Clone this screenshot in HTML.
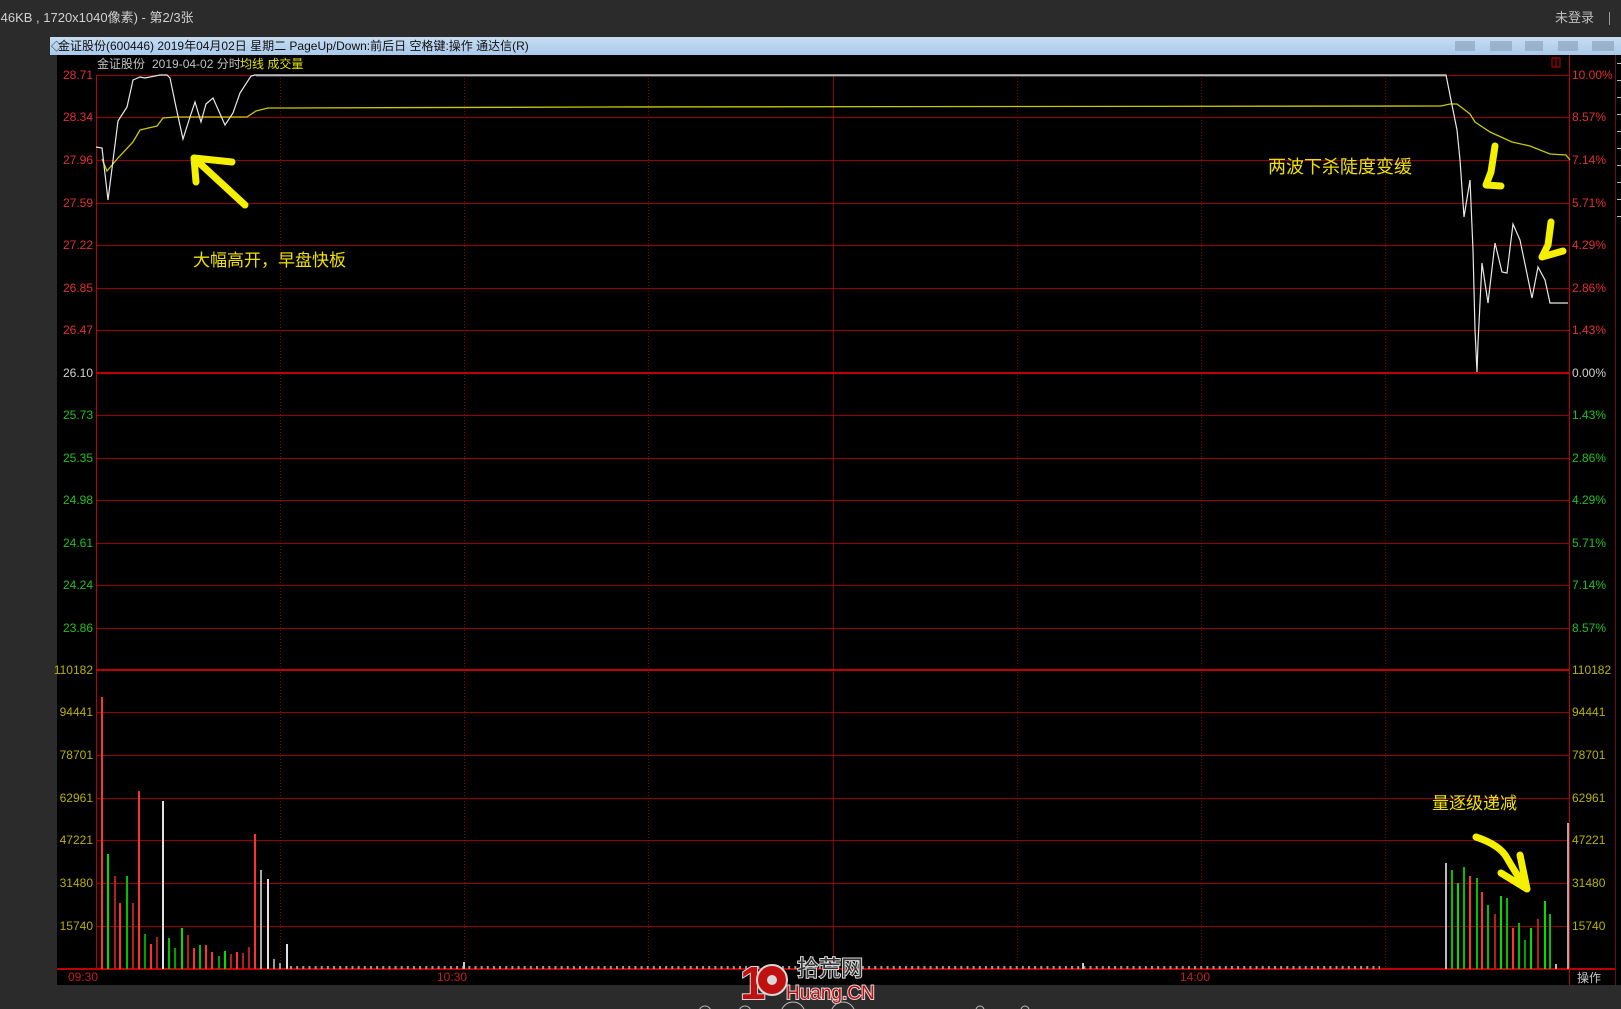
<!DOCTYPE html>
<html><head><meta charset="utf-8"><style>
html,body{margin:0;padding:0;background:#2b2b2b;width:1621px;height:1009px;overflow:hidden}
svg{display:block}
text{font-family:"Liberation Sans","Noto Sans CJK SC",sans-serif}
</style></head><body>
<svg width="1621" height="1009" viewBox="0 0 1621 1009" xmlns="http://www.w3.org/2000/svg">
<defs>
<linearGradient id="tb" x1="0" y1="0" x2="0" y2="1"><stop offset="0" stop-color="#c8ddf2"/><stop offset="1" stop-color="#a9c9ea"/></linearGradient>
<pattern id="tiny" x="290" y="0" width="6.15" height="1009" patternUnits="userSpaceOnUse"><rect x="0" y="966" width="2" height="3" fill="#9a9a9a"/></pattern>
</defs>
<rect width="1621" height="1009" fill="#2b2b2b"/>
<text x="-3" y="22" font-size="13" fill="#d0d0d0">.46KB , 1720x1040像素) - 第2/3张</text>
<text x="1555" y="22" font-size="13" fill="#bdbdbd">未登录</text>
<rect x="1609" y="12" width="1" height="13" fill="#999"/>
<!-- title bar -->
<rect x="50" y="37" width="1571" height="18" fill="url(#tb)"/>
<text x="51" y="50" font-size="11" fill="#222">◇</text>
<text x="58" y="50" font-size="12" fill="#111">金证股份(600446) 2019年04月02日 星期二 PageUp/Down:前后日 空格键:操作 通达信(R)</text>
<g fill="#8fa6bf" opacity="0.7"><rect x="1455" y="41" width="20" height="10"/><rect x="1490" y="41" width="22" height="10"/><rect x="1525" y="41" width="18" height="10"/><rect x="1558" y="41" width="20" height="10"/><rect x="1592" y="41" width="22" height="10"/></g>
<!-- chart panel -->
<rect x="57" y="55" width="1564" height="930" fill="#000"/>
<rect x="1615" y="55" width="1" height="930" fill="#6a1010"/>
<g fill="#bbb"><rect x="1617" y="63" width="4" height="1"/><rect x="1617" y="80" width="4" height="1"/><rect x="1617" y="97" width="4" height="1"/><rect x="1617" y="114" width="4" height="1"/><rect x="1617" y="131" width="4" height="1"/><rect x="1617" y="148" width="4" height="1"/><rect x="1617" y="165" width="4" height="1"/><rect x="1617" y="182" width="4" height="1"/><rect x="1617" y="199" width="4" height="1"/><rect x="1617" y="216" width="4" height="1"/></g>
<text x="97" y="68" font-size="12" fill="#c0c0c0">金证股份</text>
<text x="152" y="68" font-size="12" fill="#c0c0c0">2019-04-02 分时</text>
<text x="240" y="68" font-size="12" fill="#e0e000">均线 成交量</text>
<rect x="1552" y="58" width="8" height="9" fill="none" stroke="#c00" stroke-width="1"/><rect x="1555.5" y="58" width="1" height="9" fill="#c00"/>
<!-- vertical grid -->
<g stroke="#8a0000" stroke-width="1" stroke-dasharray="1,2">
<line x1="280.5" y1="75" x2="280.5" y2="969"/><line x1="464.5" y1="75" x2="464.5" y2="969"/><line x1="648.5" y1="75" x2="648.5" y2="969"/>
<line x1="1017.5" y1="75" x2="1017.5" y2="969"/><line x1="1201.5" y1="75" x2="1201.5" y2="969"/><line x1="1385.5" y1="75" x2="1385.5" y2="969"/>
</g>
<line x1="833.5" y1="75" x2="833.5" y2="969" stroke="#8a0000" stroke-width="1"/>
<!-- horizontal grid -->
<g stroke="#9a0000" stroke-width="1">
<line x1="96" y1="75.5" x2="1569" y2="75.5"/><line x1="96" y1="117.5" x2="1569" y2="117.5"/><line x1="96" y1="160.5" x2="1569" y2="160.5"/><line x1="96" y1="203.5" x2="1569" y2="203.5"/><line x1="96" y1="245.5" x2="1569" y2="245.5"/><line x1="96" y1="288.5" x2="1569" y2="288.5"/><line x1="96" y1="330.5" x2="1569" y2="330.5"/>
<line x1="96" y1="415.5" x2="1569" y2="415.5"/><line x1="96" y1="458.5" x2="1569" y2="458.5"/><line x1="96" y1="500.5" x2="1569" y2="500.5"/><line x1="96" y1="543.5" x2="1569" y2="543.5"/><line x1="96" y1="585.5" x2="1569" y2="585.5"/><line x1="96" y1="628.5" x2="1569" y2="628.5"/>
<line x1="96" y1="712.5" x2="1569" y2="712.5"/><line x1="96" y1="755.5" x2="1569" y2="755.5"/><line x1="96" y1="798.5" x2="1569" y2="798.5"/><line x1="96" y1="840.5" x2="1569" y2="840.5"/><line x1="96" y1="883.5" x2="1569" y2="883.5"/><line x1="96" y1="926.5" x2="1569" y2="926.5"/>
</g>
<g stroke="#c00000" stroke-width="2">
<line x1="96" y1="373" x2="1569" y2="373"/><line x1="96" y1="670" x2="1569" y2="670"/><line x1="57" y1="969" x2="1615" y2="969"/>
</g>
<line x1="96.5" y1="75" x2="96.5" y2="969" stroke="#c00000"/>
<line x1="1569.5" y1="55" x2="1569.5" y2="985" stroke="#c00000"/>
<!-- left labels -->
<g font-size="12" text-anchor="end">
<g fill="#e03030"><text x="93" y="79">28.71</text><text x="93" y="121">28.34</text><text x="93" y="164">27.96</text><text x="93" y="207">27.59</text><text x="93" y="249">27.22</text><text x="93" y="292">26.85</text><text x="93" y="334">26.47</text></g>
<text x="93" y="377" fill="#d0d0d0">26.10</text>
<g fill="#20c020"><text x="93" y="419">25.73</text><text x="93" y="462">25.35</text><text x="93" y="504">24.98</text><text x="93" y="547">24.61</text><text x="93" y="589">24.24</text><text x="93" y="632">23.86</text></g>
<g fill="#b8b000"><text x="93" y="674">110182</text><text x="93" y="716">94441</text><text x="93" y="759">78701</text><text x="93" y="802">62961</text><text x="93" y="844">47221</text><text x="93" y="887">31480</text><text x="93" y="930">15740</text></g>
</g>
<!-- right labels -->
<g font-size="12">
<g fill="#e03030"><text x="1572" y="79">10.00%</text><text x="1572" y="121">8.57%</text><text x="1572" y="164">7.14%</text><text x="1572" y="207">5.71%</text><text x="1572" y="249">4.29%</text><text x="1572" y="292">2.86%</text><text x="1572" y="334">1.43%</text></g>
<text x="1572" y="377" fill="#d0d0d0">0.00%</text>
<g fill="#20c020"><text x="1572" y="419">1.43%</text><text x="1572" y="462">2.86%</text><text x="1572" y="504">4.29%</text><text x="1572" y="547">5.71%</text><text x="1572" y="589">7.14%</text><text x="1572" y="632">8.57%</text></g>
<g fill="#b8b000"><text x="1572" y="674">110182</text><text x="1572" y="716">94441</text><text x="1572" y="759">78701</text><text x="1572" y="802">62961</text><text x="1572" y="844">47221</text><text x="1572" y="887">31480</text><text x="1572" y="930">15740</text></g>
</g>
<!-- time labels -->
<g font-size="12" fill="#c02020"><text x="68" y="981">09:30</text><text x="437" y="981">10:30</text><text x="1180" y="981">14:00</text></g>
<text x="1577" y="982" font-size="12" fill="#c8c8c8">操作</text>
<!-- avg line -->
<polyline fill="none" stroke="#c8c800" stroke-width="1.3" points="102,159 107,171 118,158 133,142 140,130 157,126 163,118 175,117 247,117 256,111 268,108 285,108 600,107 1441,106 1450,104 1457,104 1470,114 1475,122 1490,132 1512,142 1530,146 1550,154 1566,155 1570,160"/>
<!-- price line -->
<polyline fill="none" stroke="#e8e8e8" stroke-width="1.2" points="96,147 102,148 108,200 118,121 127,107 133,80 140,77 145,78 160,75 167,75 170,78 176,107 183,139 190,117 195,102 201,122 206,104 213,98 225,125 233,113 240,93 251,76 255,75 1446,75 1450,95 1457,130 1460,160 1464,217 1470,180 1473,250 1475,330 1477,372 1478,343 1482,263 1488,303 1495,243 1502,272 1507,273 1513,224 1520,240 1532,298 1538,267 1545,280 1550,303 1568,303"/>
<polyline fill="none" stroke="#888" stroke-width="1" points="256,76 1446,76"/>
<!-- volume bars -->
<rect x="290" y="960" width="1090" height="10" fill="url(#tiny)"/>
<g stroke-width="2">
<line x1="102" y1="697" x2="102" y2="969" stroke="#ff3232"/>
<line x1="108" y1="854" x2="108" y2="969" stroke="#00e000"/>
<line x1="115" y1="876" x2="115" y2="969" stroke="#b02020"/>
<line x1="120" y1="903" x2="120" y2="969" stroke="#ff3232"/>
<line x1="127" y1="876" x2="127" y2="969" stroke="#00c000"/>
<line x1="133" y1="903" x2="133" y2="969" stroke="#b02020"/>
<line x1="139" y1="791" x2="139" y2="969" stroke="#ff3232"/>
<line x1="145" y1="934" x2="145" y2="969" stroke="#00a000"/>
<line x1="151" y1="944" x2="151" y2="969" stroke="#ff3232"/>
<line x1="157" y1="937" x2="157" y2="969" stroke="#b02020"/>
<line x1="163" y1="801" x2="163" y2="969" stroke="#e0e0e0"/>
<line x1="169" y1="938" x2="169" y2="969" stroke="#00c000"/>
<line x1="175" y1="948" x2="175" y2="969" stroke="#00a000"/>
<line x1="182" y1="928" x2="182" y2="969" stroke="#00e000"/>
<line x1="188" y1="935" x2="188" y2="969" stroke="#b02020"/>
<line x1="194" y1="948" x2="194" y2="969" stroke="#ff3232"/>
<line x1="200" y1="945" x2="200" y2="969" stroke="#00c000"/>
<line x1="206" y1="945" x2="206" y2="969" stroke="#ff3232"/>
<line x1="212" y1="952" x2="212" y2="969" stroke="#ff3232"/>
<line x1="219" y1="956" x2="219" y2="969" stroke="#00a000"/>
<line x1="225" y1="951" x2="225" y2="969" stroke="#00e000"/>
<line x1="231" y1="954" x2="231" y2="969" stroke="#b02020"/>
<line x1="237" y1="952" x2="237" y2="969" stroke="#ff3232"/>
<line x1="243" y1="953" x2="243" y2="969" stroke="#b02020"/>
<line x1="249" y1="947" x2="249" y2="969" stroke="#b02020"/>
<line x1="255" y1="834" x2="255" y2="969" stroke="#ff3232"/>
<line x1="261" y1="870" x2="261" y2="969" stroke="#aaa"/>
<line x1="268" y1="879" x2="268" y2="969" stroke="#e0e0e0"/>
<line x1="274" y1="959" x2="274" y2="969" stroke="#999"/>
<line x1="280" y1="963" x2="280" y2="969" stroke="#999"/>
<line x1="287" y1="944" x2="287" y2="969" stroke="#e0e0e0"/>
<line x1="464" y1="962" x2="464" y2="969" stroke="#ccc"/>
<line x1="1083" y1="963" x2="1083" y2="969" stroke="#ccc"/>
<line x1="1446" y1="863" x2="1446" y2="969" stroke="#bbb"/>
<line x1="1452" y1="870" x2="1452" y2="969" stroke="#00c000"/>
<line x1="1458" y1="883" x2="1458" y2="969" stroke="#00e000"/>
<line x1="1464" y1="867" x2="1464" y2="969" stroke="#00c000"/>
<line x1="1470" y1="876" x2="1470" y2="969" stroke="#ff3232"/>
<line x1="1477" y1="878" x2="1477" y2="969" stroke="#00c000"/>
<line x1="1482" y1="892" x2="1482" y2="969" stroke="#ff3232"/>
<line x1="1488" y1="905" x2="1488" y2="969" stroke="#00c000"/>
<line x1="1495" y1="914" x2="1495" y2="969" stroke="#b02020"/>
<line x1="1501" y1="896" x2="1501" y2="969" stroke="#00e000"/>
<line x1="1507" y1="898" x2="1507" y2="969" stroke="#00c000"/>
<line x1="1513" y1="928" x2="1513" y2="969" stroke="#ff3232"/>
<line x1="1519" y1="923" x2="1519" y2="969" stroke="#00c000"/>
<line x1="1525" y1="940" x2="1525" y2="969" stroke="#00a000"/>
<line x1="1531" y1="928" x2="1531" y2="969" stroke="#00e000"/>
<line x1="1538" y1="919" x2="1538" y2="969" stroke="#b02020"/>
<line x1="1545" y1="901" x2="1545" y2="969" stroke="#00e000"/>
<line x1="1550" y1="914" x2="1550" y2="969" stroke="#00c000"/>
<line x1="1556" y1="964" x2="1556" y2="969" stroke="#bbb"/>
<line x1="1568" y1="823" x2="1568" y2="969" stroke="#aaa"/>
</g>
<!-- annotations -->
<g font-size="17" fill="#f0e000">
<text x="193" y="266">大幅高开，早盘快板</text>
<text x="1268" y="173" font-size="18">两波下杀陡度变缓</text>
<text x="1432" y="809">量逐级递减</text>
</g>
<g fill="none" stroke="#f5f000" stroke-width="7" stroke-linecap="round" stroke-linejoin="round">
<path d="M245,205 L194,158 M194,158 L196,182 M194,158 L232,162"/>
<path d="M1495,146 L1491,172 L1486,185 L1501,186"/>
<path d="M1551,222 L1548,245 L1542,257 L1563,251"/>
<path d="M1476,837 Q1500,845 1507,858 Q1516,874 1527,889 M1520,855 L1527,889 L1501,873"/>
</g>
<!-- watermark -->
<g>
<text x="740" y="999" font-size="46" font-weight="bold" fill="#c01010" stroke="#d8d8d8" stroke-width="2" paint-order="stroke" font-family="Liberation Sans,sans-serif">1</text>
<circle cx="772" cy="980" r="15" fill="#c01010" stroke="#d8d8d8" stroke-width="2"/>
<circle cx="772" cy="980" r="5" fill="#d8d8d8"/>
<text x="797" y="976" font-size="22" fill="#333" stroke="#d8d8d8" stroke-width="2" paint-order="stroke">拾荒网</text>
<text x="786" y="999" font-size="19" fill="#c01010" stroke="#d8d8d8" stroke-width="2" paint-order="stroke">Huang.CN</text>
</g>
<g fill="none" stroke="#bbb" stroke-width="1"><circle cx="705" cy="1012" r="6"/><circle cx="745" cy="1012" r="6"/><circle cx="793" cy="1014" r="12"/><circle cx="843" cy="1014" r="12"/><circle cx="980" cy="1010" r="4"/><circle cx="1025" cy="1010" r="4"/></g>
</svg>
</body></html>
